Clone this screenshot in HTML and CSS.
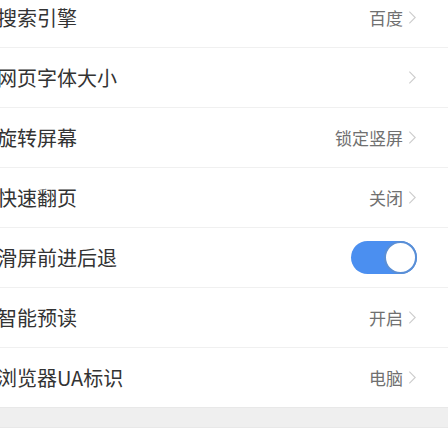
FILE: index.html
```html
<!DOCTYPE html>
<html lang="zh-CN">
<head>
<meta charset="utf-8">
<link rel="stylesheet" href="styles.css">
</head>
<body>
<div class="list">
  <div class="row"><span class="label">搜索引擎</span><span class="value">百度<svg class="chev" viewBox="0 0 10 16"><path d="M1.5 1.5 L8 8 L1.5 14.5"/></svg></span></div>
  <div class="row"><span class="label">网页字体大小</span><span class="value"><svg class="chev" viewBox="0 0 10 16"><path d="M1.5 1.5 L8 8 L1.5 14.5"/></svg></span></div>
  <div class="row"><span class="label">旋转屏幕</span><span class="value">锁定竖屏<svg class="chev" viewBox="0 0 10 16"><path d="M1.5 1.5 L8 8 L1.5 14.5"/></svg></span></div>
  <div class="row"><span class="label">快速翻页</span><span class="value">关闭<svg class="chev" viewBox="0 0 10 16"><path d="M1.5 1.5 L8 8 L1.5 14.5"/></svg></span></div>
  <div class="row"><span class="label">滑屏前进后退</span><span class="toggle"><span class="knob"></span></span></div>
  <div class="row"><span class="label">智能预读</span><span class="value">开启<svg class="chev" viewBox="0 0 10 16"><path d="M1.5 1.5 L8 8 L1.5 14.5"/></svg></span></div>
  <div class="row last"><span class="label">浏览器UA标识</span><span class="value">电脑<svg class="chev" viewBox="0 0 10 16"><path d="M1.5 1.5 L8 8 L1.5 14.5"/></svg></span></div>
</div>
<div class="band"></div>
</body>
</html>
```
FILE: styles.css
```css
html, body {
  margin: 0;
  padding: 0;
  background: #ffffff;
  overflow: hidden;
}
body {
  font-family: "Noto Sans CJK SC", "Noto Sans", sans-serif;
}
.list {
  margin-top: -12px;
}
.row {
  height: 59px;
  border-bottom: 1px solid #f0f0f0;
  display: flex;
  align-items: center;
  justify-content: space-between;
  padding: 0 31px 0 0;
  margin-left: -3px;
}
.row.last {
  border-bottom: 1px solid #e8e8e8;
}
.label {
  font-size: 20px;
  color: #333333;
}
.value {
  display: flex;
  align-items: center;
  font-size: 17px;
  color: #707070;
}
.chev {
  width: 9px;
  height: 15px;
  margin-left: 5px;
  fill: none;
  stroke: #cccccc;
  stroke-width: 1.2;
}
.toggle {
  width: 66px;
  height: 33px;
  border-radius: 17px;
  background: #4b8ff0;
  display: flex;
  align-items: center;
  justify-content: flex-end;
  box-sizing: border-box;
}
.knob {
  width: 33px;
  height: 33px;
  border-radius: 50%;
  background: #ffffff;
  border: 2px solid #5a8fd6;
  box-sizing: border-box;
}
.band {
  height: 19px;
  background: #efefef;
  border-bottom: 1px solid #e8e8e8;
}
```
